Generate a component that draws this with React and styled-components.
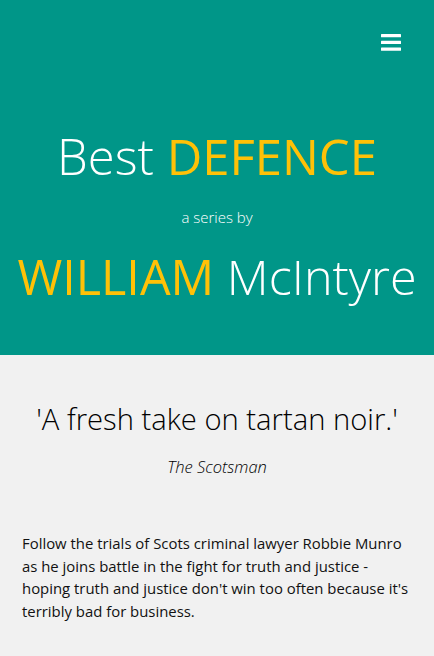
import React from "react";
import styled, { createGlobalStyle } from "styled-components";

const Global = createGlobalStyle`
  html, body { margin: 0; padding: 0; background: #f1f1f1; }
  body { font-family: "Open Sans", "Lato", sans-serif; font-size: 15px; line-height: 1.5; color: #000; }
  * { box-sizing: border-box; }
`;

const Header = styled.header`
  background: #009688;
  height: 355px;
  display: flex;
  flex-direction: column;
  align-items: center;
  padding: 34px 0 0;
`;

const TopBar = styled.div`
  align-self: stretch;
  display: flex;
  justify-content: flex-end;
  padding-right: 33px;
`;

const MenuButton = styled.button`
  background: none;
  border: 0;
  padding: 0;
  width: 20px;
  height: 17px;
  display: block;
  cursor: pointer;
`;

const Title = styled.h1`
  margin: 79px 0 0;
  font-weight: 300;
  font-size: 49px;
  line-height: 52px;
  color: #fff;
  white-space: nowrap;
`;

const Accent = styled.span`
  color: #ffc107;
  font-weight: 400;
`;

const Series = styled.p`
  margin: 24px 0 0;
  color: #fff;
  font-weight: 300;
  font-size: 15px;
  line-height: 22px;
`;

const Author = styled.h2`
  margin: 22px 0 0;
  font-weight: 300;
  font-size: 48.5px;
  line-height: 52px;
  color: #fff;
  white-space: nowrap;
`;

const Main = styled.main`
  padding: 0 22px;
`;

const Quote = styled.blockquote`
  margin: 0;
  padding-top: 44px;
  text-align: center;
  font-weight: 300;
  font-size: 29.2px;
  line-height: 40px;
`;

const Source = styled.p`
  margin: 17px 0 0;
  text-align: center;
  font-style: italic;
  font-weight: 300;
  font-size: 16.5px;
  line-height: 22px;
`;

const Body = styled.p`
  margin: 54px 0 0;
  font-weight: 400;
  font-size: 14.9px;
  line-height: 22.5px;
  color: #111;
`;

function Bars() {
  return (
    <svg width="20" height="17" viewBox="0 0 20 17">
      <rect x="0" y="0" width="20" height="3.2" rx="0.5" fill="#fff" />
      <rect x="0" y="6.8" width="20" height="3.2" rx="0.5" fill="#fff" />
      <rect x="0" y="13.5" width="20" height="3.2" rx="0.5" fill="#fff" />
    </svg>
  );
}

export default function App() {
  return (
    <>
      <Global />
      <Header>
        <TopBar>
          <MenuButton aria-label="menu">
            <Bars />
          </MenuButton>
        </TopBar>
        <Title>
          Best <Accent>DEFENCE</Accent>
        </Title>
        <Series>a series by</Series>
        <Author>
          <Accent>WILLIAM</Accent> McIntyre
        </Author>
      </Header>
      <Main>
        <Quote>'A fresh take on tartan noir.'</Quote>
        <Source>The Scotsman</Source>
        <Body>
          Follow the trials of Scots criminal lawyer Robbie Munro as he joins battle in the fight for truth and justice -
          hoping truth and justice don't win too often because it's terribly bad for business.
        </Body>
      </Main>
    </>
  );
}
